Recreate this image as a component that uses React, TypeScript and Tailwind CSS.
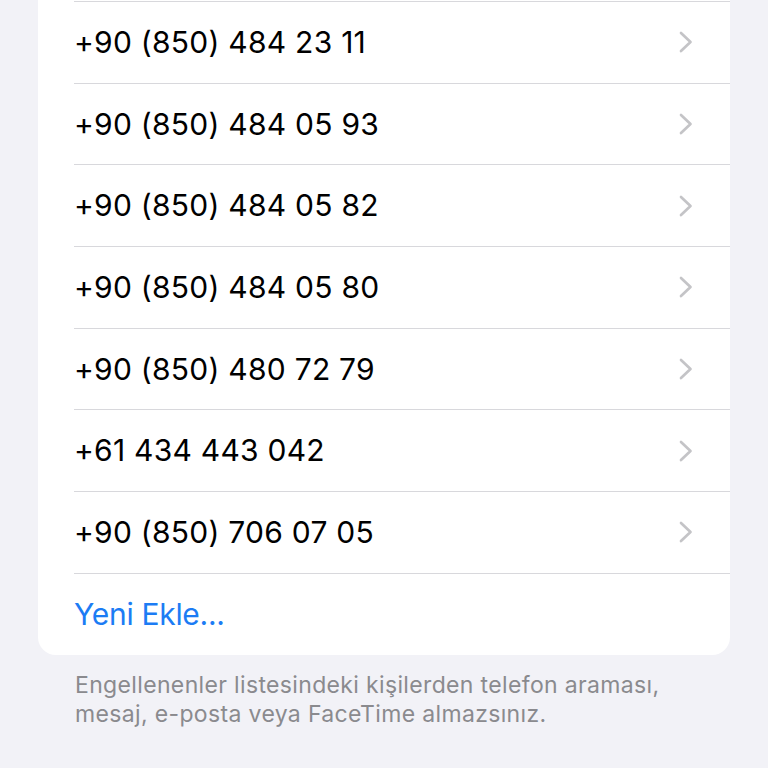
import React from 'react';

const numbers = [
  '+90 (850) 484 23 11',
  '+90 (850) 484 05 93',
  '+90 (850) 484 05 82',
  '+90 (850) 484 05 80',
  '+90 (850) 480 72 79',
  '+61 434 443 042',
  '+90 (850) 706 07 05',
];

const Chevron = () => (
  <svg width="16" height="22" viewBox="0 0 16 22" fill="none" className="shrink-0">
    <path d="M3 2L12.5 11L3 20" stroke="#c4c4c7" strokeWidth="2.7" strokeLinecap="round" strokeLinejoin="round" />
  </svg>
);

export default function App() {
  return (
    <div className="min-h-[768px] w-[768px] bg-[#f2f2f7] overflow-hidden" style={{ fontFamily: 'Inter, "Noto Sans", sans-serif' }}>
      <div className="mx-[38px] bg-white rounded-b-[18px]">
        <div className="pt-px">
          {numbers.map((n) => (
            <div key={n} className="pl-[36px]">
              <div className="h-px bg-[#d8d8dc]" />
              <div className="h-[80.7px] flex items-center justify-between pr-[36px]">
                <span className="text-[30px] text-black tracking-[0.25px]">{n}</span>
                <Chevron />
              </div>
            </div>
          ))}
          <div className="pl-[36px]">
            <div className="h-px bg-[#d8d8dc]" />
            <div className="h-[80.7px] flex items-center">
              <span className="text-[30px] text-[#1c7cf4] tracking-[-0.3px]">Yeni Ekle...</span>
            </div>
          </div>
        </div>
      </div>
      <p className="mx-[75px] mt-[16px] text-[23px] leading-[29px] text-[#8a8a8e] tracking-[0.35px]">
        Engellenenler listesindeki kişilerden telefon araması, mesaj, e-posta veya FaceTime almazsınız.
      </p>
    </div>
  );
}
